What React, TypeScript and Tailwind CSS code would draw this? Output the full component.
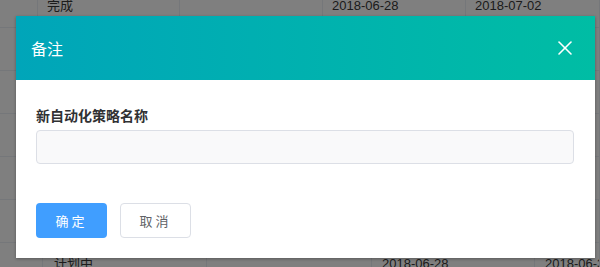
import { X } from 'lucide-react';

const topCells = [
    { w: 38, text: '' },
    { w: 142, text: '完成', pad: 9 },
    { w: 143, text: '' },
    { w: 143, text: '2018-06-28', pad: 9 },
    { w: 134, text: '2018-07-02', pad: 9 }
];

const bottomCells = [
    { w: 43, text: '' },
    { w: 164, text: '计划中', pad: 11 },
    { w: 165, text: '' },
    { w: 163, text: '2018-06-28', pad: 10 },
    { w: 65, text: '2018-06-30', pad: 10 }
];

const Row: React.FC<{ cells: { w: number; text: string; pad?: number }[] }> = ({ cells }) => (
    <div className="flex h-[43px] border-b border-[#ebeef5]">
        {cells.map((c, i) => (
            <div
                key={i}
                className="flex shrink-0 items-center overflow-hidden whitespace-nowrap border-r border-[#ebeef5] text-[13px] text-[#383838]"
                style={{ width: c.w, paddingLeft: c.pad ?? 0 }}>
                {c.text}
            </div>
        ))}
    </div>
);

export default function App() {
    return (
        <div className="relative h-[267px] w-[600px] overflow-hidden bg-white font-['Liberation_Sans','Noto_Sans_CJK_SC',sans-serif]">
            {/* table behind the mask */}
            <div className="-mt-[15px]">
                <Row cells={topCells} />
                <Row cells={topCells.map((c) => ({ ...c, text: '' }))} />
                <Row cells={topCells.map((c) => ({ ...c, text: '' }))} />
                <Row cells={bottomCells.map((c) => ({ ...c, text: '' }))} />
                <Row cells={bottomCells.map((c) => ({ ...c, text: '' }))} />
                <Row cells={bottomCells.map((c) => ({ ...c, text: '' }))} />
                <Row cells={bottomCells} />
            </div>

            <div className="absolute inset-0 bg-black/50" />

            <div className="absolute left-[16px] top-[16px] flex h-[242px] w-[579px] flex-col bg-white shadow-[0_1px_3px_rgba(0,0,0,0.3)] font-['Noto_Sans_CJK_SC',sans-serif]">
                <div className="flex h-[64px] items-center justify-between bg-gradient-to-r from-[#00a5b9] to-[#00bda4] pl-[15px] pr-[18px]">
                    <span className="text-[16px] text-white">备注</span>
                    <X className="h-[24px] w-[24px] text-white" strokeWidth={1.6} />
                </div>

                <div className="px-5 pt-[25px]">
                    <label className="block text-[14px] font-bold leading-[20px] text-[#303133]">
                        新自动化策略名称
                    </label>
                    <input
                        type="text"
                        className="mt-[5px] block h-[34px] w-[538px] rounded-[4px] border border-[#dcdfe6] bg-[#f9f9fa] outline-none"
                    />

                    <div className="mt-[39px] flex gap-[13px]">
                        <button
                            type="button"
                            className="h-[35px] w-[71px] rounded-[4px] bg-[#409eff] text-[13px] tracking-[3px] text-white">
                            确定
                        </button>
                        <button
                            type="button"
                            className="h-[35px] w-[71px] rounded-[4px] border border-[#dcdfe6] bg-white text-[13px] tracking-[3px] text-[#606266]">
                            取消
                        </button>
                    </div>
                </div>
            </div>
        </div>
    );
}
